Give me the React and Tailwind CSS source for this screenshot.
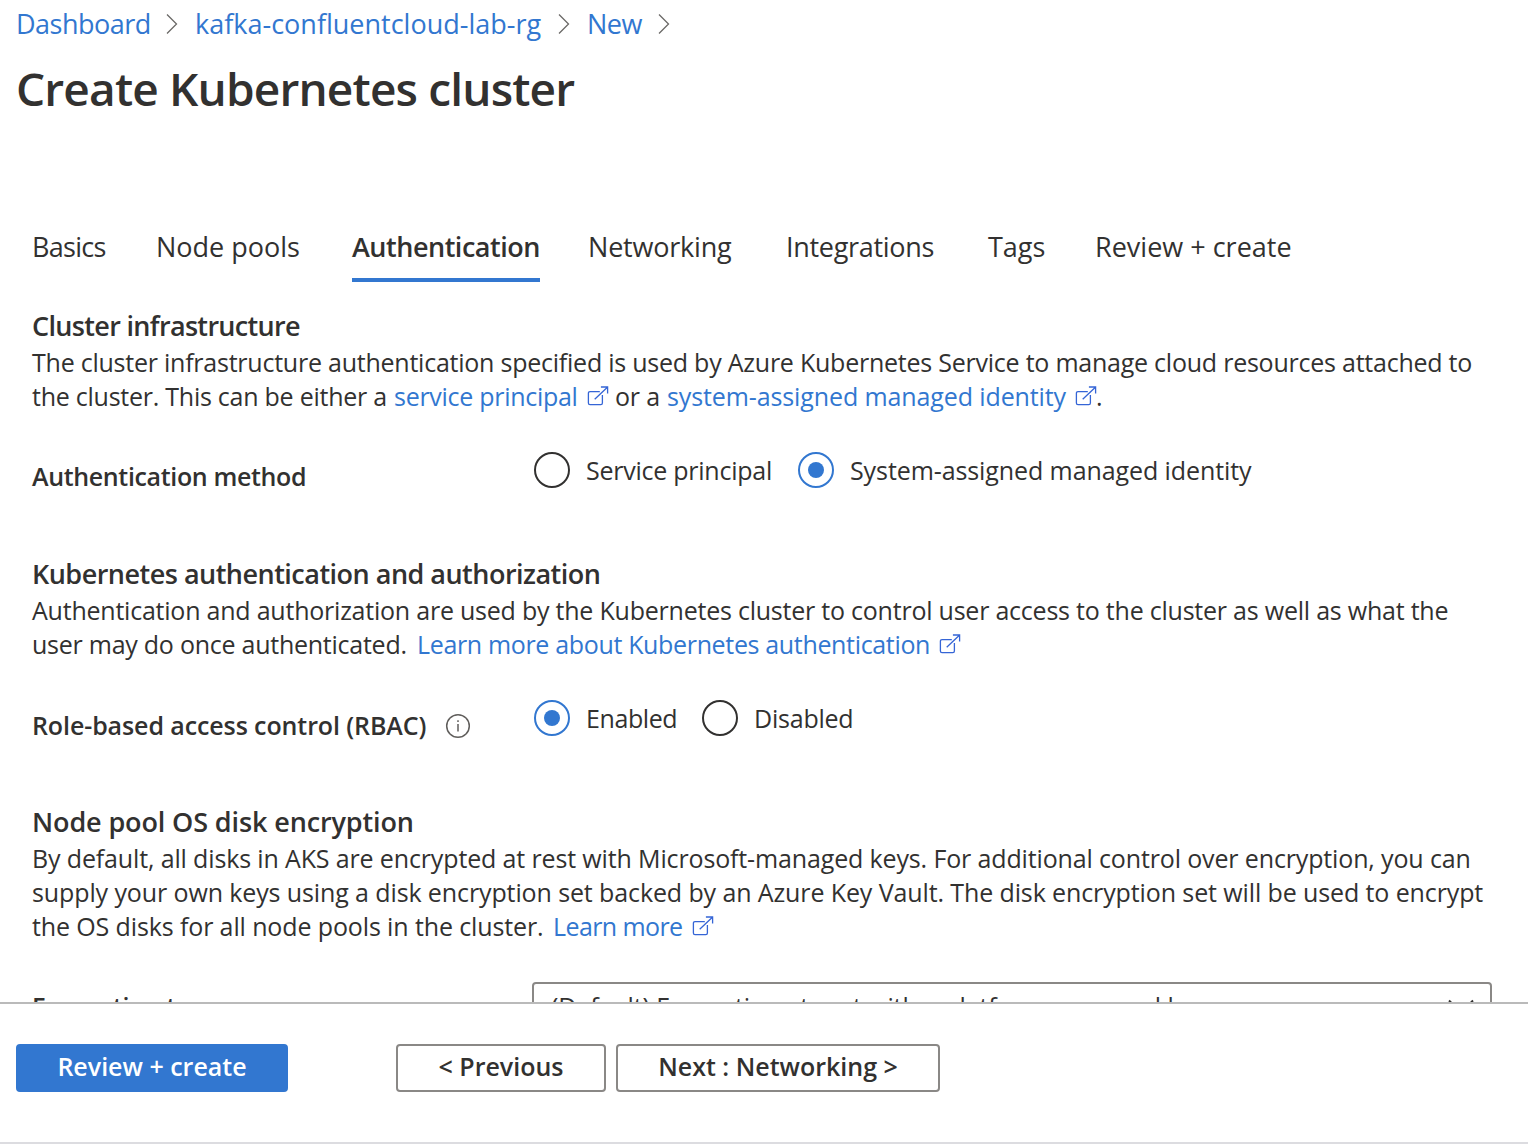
import React from "react";

function T({ className = "", children }) {
  return <span className={`block shrink-0 whitespace-pre ${className}`}>{children}</span>;
}

function Chevron({ className = "" }) {
  return (
    <svg className={`block shrink-0 ${className}`} width="12" height="22" viewBox="0 0 12 22" fill="none" stroke="#6b6967" strokeWidth="1.3">
      <path d="M1 1.5 10.5 11 1 20.5" />
    </svg>
  );
}

function External() {
  return (
    <svg className="mt-[7px] block shrink-0" width="22" height="20" viewBox="0 0 22 20" fill="none" stroke="#3565d6" strokeWidth="1.3">
      <path d="M12.8 5.6H3Q1.4 5.6 1.4 7.2V17Q1.4 18.6 3 18.6H13.8Q15.4 18.6 15.4 17V9" />
      <path d="M7.7 13.2 20.4 1.2M13.9 1H20.6V7.4" />
    </svg>
  );
}

function Radio({ checked, children, className = "" }) {
  return (
    <label className={`flex h-9 items-center ${className}`}>
      <span className={`mr-4 flex size-9 items-center justify-center rounded-full border-2 ${checked ? "border-[#3277d0]" : "border-[#323130]"}`}>
        {checked && <span className="size-4 rounded-full bg-[#3277d0]" />}
      </span>
      {children}
    </label>
  );
}

const heading = "block whitespace-pre text-[27px] leading-[38px] font-semibold";
const link = "text-[#3277d0]";
const button = "h-12 rounded-[4px] pb-[4px] font-semibold leading-[40px]";

export default function App() {
  return (
    <div className="flex h-[1148px] w-[1528px] flex-col overflow-hidden bg-white font-['Open_Sans',sans-serif] text-[25px] leading-[34px] text-[#323130]">
      <nav className="flex h-12 items-center pl-4 text-[27px] text-[#3277d0]">
        <T className="w-[150px] tracking-[-0.5px]">Dashboard</T>
        <Chevron className="mr-[17px]" />
        <T className="w-[363px]">kafka-confluentcloud-lab-rg</T>
        <Chevron className="mr-[17px]" />
        <T className="w-[71px] tracking-[-0.5px]">New</T>
        <Chevron />
      </nav>
      <h1 className="mt-2 h-16 pl-4 text-[46px] leading-[64px] font-semibold tracking-[-0.83px] whitespace-pre">Create Kubernetes cluster</h1>

      <div className="mt-[102px] flex h-[60px] pl-8 text-[27px] leading-[50px]">
        <T className="w-[124px] tracking-[-0.7px]">Basics</T>
        <T className="w-[196px]">Node pools</T>
        <T className="w-[188px] border-b-4 border-[#3277d0] font-semibold tracking-[-0.48px]">Authentication</T>
        <T className="ml-12 w-[198px] tracking-[-0.2px]">Networking</T>
        <T className="w-[202px] tracking-[-0.3px]">Integrations</T>
        <T className="w-[107px]">Tags</T>
        <T>Review + create</T>
      </div>

      <main className="min-h-0 flex-1 overflow-hidden pt-[25px] pl-8">
        <section className="h-[248px]">
          <h2 className={`${heading} tracking-[-0.67px]`}>Cluster infrastructure</h2>
          <T className="tracking-[-0.235px]">The cluster infrastructure authentication specified is used by Azure Kubernetes Service to manage cloud resources attached to</T>
          <div className="flex">
            <T className="w-[362px] tracking-[-0.25px]">the cluster. This can be either a</T>
            <T className={`w-[193px] tracking-[-0.28px] ${link}`}>service principal</T>
            <External />
            <T className="ml-[6px] w-[52px] tracking-[-0.17px]">or a</T>
            <T className={`w-[408px] tracking-[-0.11px] ${link}`}>system-assigned managed identity</T>
            <External />
            <T className="-ml-px">.</T>
          </div>
          <div className="mt-[39px] flex">
            <T className="mt-[7px] w-[502px] font-semibold tracking-[-0.35px]">Authentication method</T>
            <Radio className="w-[264px]"><T className="tracking-[-0.25px]">Service principal</T></Radio>
            <Radio checked><T className="tracking-[-0.09px]">System-assigned managed identity</T></Radio>
          </div>
        </section>

        <section className="h-[248px]">
          <h2 className={`${heading} tracking-[-0.51px]`}>Kubernetes authentication and authorization</h2>
          <T className="tracking-[-0.225px]">Authentication and authorization are used by the Kubernetes cluster to control user access to the cluster as well as what the</T>
          <div className="flex">
            <T className="w-[385px] tracking-[-0.25px]">user may do once authenticated.</T>
            <T className={`w-[522px] tracking-[-0.34px] ${link}`}>Learn more about Kubernetes authentication</T>
            <External />
          </div>
          <div className="mt-[39px] flex">
            <T className="mt-[8px] w-[413px] font-semibold tracking-[-0.1px]">Role-based access control (RBAC)</T>
            <svg className="mt-[13px] mr-[63px] block" width="26" height="26" viewBox="0 0 26 26" fill="none" stroke="#605e5c" strokeWidth="1.5">
              <circle cx="13" cy="13" r="11.3" />
              <path d="M13 11V18.5M13 7.2V9" />
            </svg>
            <Radio checked className="w-[168px]"><T className="tracking-[-0.4px]">Enabled</T></Radio>
            <Radio><T className="tracking-[-0.22px]">Disabled</T></Radio>
          </div>
        </section>

        <section>
          <h2 className={`${heading} tracking-[-0.12px]`}>Node pool OS disk encryption</h2>
          <T className="tracking-[-0.14px]">By default, all disks in AKS are encrypted at rest with Microsoft-managed keys. For additional control over encryption, you can</T>
          <T className="tracking-[-0.11px]">supply your own keys using a disk encryption set backed by an Azure Key Vault. The disk encryption set will be used to encrypt</T>
          <div className="flex">
            <T className="w-[521px] tracking-[-0.12px]">the OS disks for all node pools in the cluster.</T>
            <T className={`w-[139px] tracking-[-0.6px] ${link}`}>Learn more</T>
            <External />
          </div>
          <div className="mt-[39px] flex">
            <T className="mt-[7px] w-[500px] font-semibold tracking-[-0.2px]">Encryption type</T>
            <div className="flex h-12 w-[960px] justify-between rounded-[4px] border-2 border-[#8a8886] pt-[5px] pr-[15px] pl-[17px]">
              <T className="tracking-[-0.1px]">(Default) Encryption at-rest with a platform-managed key</T>
              <svg className="mt-[10px] block" width="28" height="16" viewBox="0 0 28 16" fill="none" stroke="#323130" strokeWidth="2">
                <path d="M2 1.5 14 13.5 26 1.5" />
              </svg>
            </div>
          </div>
        </section>
      </main>

      <footer className="flex h-[142px] shrink-0 border-t-2 border-b-2 border-t-[#bababa] border-b-[#dcdce0] pt-10 pl-4">
        <button className={`${button} mr-[108px] w-[272px] border-2 border-[#3277d0] bg-[#3277d0] text-white`}>Review + create</button>
        <button className={`${button} mr-[10px] w-[210px] border-2 border-[#8a8886] bg-white`}>&lt; Previous</button>
        <button className={`${button} w-[324px] border-2 border-[#8a8886] bg-white`}>Next : Networking &gt;</button>
      </footer>
      <div className="h-1 shrink-0" />
    </div>
  );
}
